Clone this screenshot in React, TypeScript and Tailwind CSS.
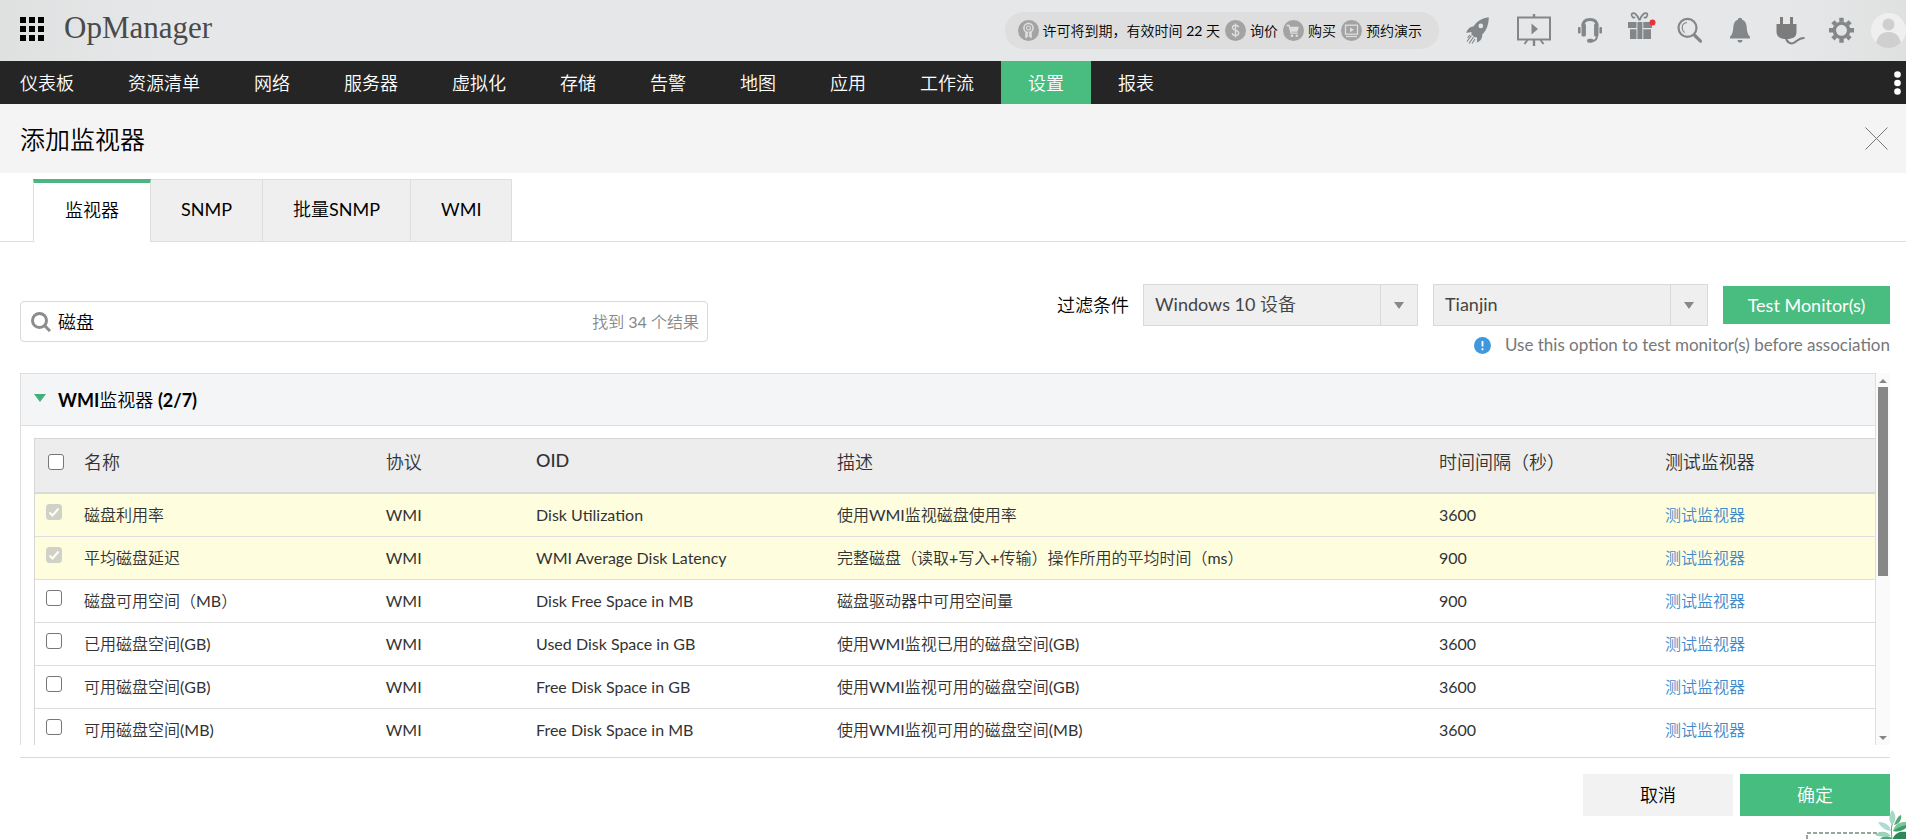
import React, { useState } from "react";

const NAV = ["仪表板", "资源清单", "网络", "服务器", "虚拟化", "存储", "告警", "地图", "应用", "工作流", "设置", "报表"];
const TABS = ["监视器", "SNMP", "批量SNMP", "WMI"];

type Monitor = { name: string; oid: string; desc: string; interval: number; associated?: boolean };

const MONITORS: Monitor[] = [
  { name: "磁盘利用率", oid: "Disk Utilization", desc: "使用WMI监视磁盘使用率", interval: 3600, associated: true },
  { name: "平均磁盘延迟", oid: "WMI Average Disk Latency", desc: "完整磁盘（读取+写入+传输）操作所用的平均时间（ms）", interval: 900, associated: true },
  { name: "磁盘可用空间（MB）", oid: "Disk Free Space in MB", desc: "磁盘驱动器中可用空间量", interval: 900 },
  { name: "已用磁盘空间(GB)", oid: "Used Disk Space in GB", desc: "使用WMI监视已用的磁盘空间(GB)", interval: 3600 },
  { name: "可用磁盘空间(GB)", oid: "Free Disk Space in GB", desc: "使用WMI监视可用的磁盘空间(GB)", interval: 3600 },
  { name: "可用磁盘空间(MB)", oid: "Free Disk Space in MB", desc: "使用WMI监视可用的磁盘空间(MB)", interval: 3600 },
];

function IconButton({ label, width, children }: { label: string; width: number; children: React.ReactNode }) {
  return (
    <button type="button" aria-label={label} className="shrink-0 text-[#83878a]">
      <svg width={width} height="36" viewBox={`0 0 ${width} 36`} fill="currentColor" className="block overflow-visible">
        {children}
      </svg>
    </button>
  );
}

function PillIcon({ children }: { children: React.ReactNode }) {
  return (
    <svg width="21" height="21" viewBox="0 0 21 21" fill="none" stroke="#dedede" className="block shrink-0">
      <circle cx="10.5" cy="10.5" r="10.5" fill="#a3a3a3" stroke="none" />
      {children}
    </svg>
  );
}

function LicensePill() {
  return (
    <div className="flex h-[37px] items-center gap-[5px] rounded-full bg-[#dedede] pl-[13px] pr-[17px] text-sm text-black">
      <span className="flex items-center gap-1">
        <PillIcon>
          <circle cx="10.5" cy="8" r="4.6" strokeWidth="1.6" />
          <circle cx="10.5" cy="8" r="2" strokeWidth="1.2" />
          <path d="M7.5 12v6l3-2 3 2v-6" fill="#dedede" strokeWidth="0.6" />
          <path d="M10.5 12.5v3.5" stroke="#a3a3a3" strokeWidth="1.2" />
        </PillIcon>
        许可将到期，有效时间 22 天
      </span>
      <a href="#quote" className="flex items-center gap-1">
        <PillIcon>
          <path d="M13.6 7.2c-.4-1.3-1.5-2-3.1-2-1.8 0-3 .9-3 2.4 0 3.5 6.2 1.9 6.2 5.4 0 1.6-1.3 2.6-3.2 2.6-1.8 0-3.1-.9-3.3-2.4M10.5 3.4v14" strokeWidth="1.4" />
        </PillIcon>
        询价
      </a>
      <a href="#buy" className="flex items-center gap-1">
        <PillIcon>
          <path d="M3.5 5.5h2.6l2 7.6h6.6" strokeWidth="1.4" />
          <path d="M6.6 6.8h9.4l-1.6 5H8z" fill="#dedede" stroke="none" />
          <circle cx="9" cy="15.8" r="1.3" fill="#dedede" stroke="none" />
          <circle cx="13.8" cy="15.8" r="1.3" fill="#dedede" stroke="none" />
        </PillIcon>
        购买
      </a>
      <a href="#demo" className="flex items-center gap-1">
        <PillIcon>
          <rect x="4.5" y="5.2" width="12" height="9" strokeWidth="1.3" />
          <path d="M9 7.4v4.8l4-2.4z" fill="#dedede" stroke="none" />
          <path d="M5 16.5h11" strokeWidth="1.2" />
        </PillIcon>
        预约演示
      </a>
    </div>
  );
}

function HeaderIcons() {
  return (
    <div className="flex items-center gap-6">
      <IconButton label="快速入门" width={26}>
        <path
          fillRule="evenodd"
          d="M23.8 4.2C17 5 11.500 8.500 8.500 13.500 5 13.500 2.500 16 1.200 20c2.200-.8 4-.9 5.600-.6l-.6 1.800 3.600 3.400 1.800-.6c.5 1.600.7 3 .2 5.600 3.600-1.600 5.800-4.400 5.400-8.200C21.500 17.500 23.700 11.500 23.800 4.200zM15.800 10.600a2.300 2.300 0 1 1 0 4.600 2.300 2.300 0 0 1 0-4.600z"
        />
        <path d="M6.500 22.500 2 28.500M8.500 24 4 30.500M10 26l-3 4.500M4.800 22 2.600 25" stroke="currentColor" strokeWidth="1.200" />
      </IconButton>
      <IconButton label="演示" width={38}>
        <path fill="none" stroke="currentColor" strokeWidth="2" d="M3 4.500h32v22H3z" />
        <path d="M17.800 1h2.400v3.500h-2.400zM17.800 27h2.400v6h-2.400zM16.500 10.500v11l6.500-5.500z" />
        <path stroke="currentColor" strokeWidth="2" d="m12.500 27-3 4M25.500 27l3 4" />
      </IconButton>
      <IconButton label="支持" width={26}>
        <g fill="none" stroke="currentColor">
          <path strokeWidth="3" d="M6 13C6 8.500 8.500 6.500 13 6.500s7 2 7 6.500" />
          <path strokeWidth="2" d="M20 22.500c0 4-2 5.500-5 5.500" />
        </g>
        <rect x="4.500" y="10.500" width="4.400" height="13" rx="1.600" />
        <rect x="17.100" y="10.500" width="4.400" height="13" rx="1.600" />
        <rect x="1" y="14" width="2.600" height="6.500" rx="1" />
        <rect x="22.400" y="14" width="2.600" height="6.500" rx="1" />
        <rect x="10" y="25.800" width="6.500" height="4" rx="2" />
      </IconButton>
      <IconButton label="新功能" width={26}>
        <path fill="none" stroke="currentColor" strokeWidth="1.800" d="M12.500 7.500C10.500 1.500 6.500-1.500 4.800.8 3.500 3 7 6 8 4M12.500 7.500C14.500 1.500 18.500-1.500 20.200.8 21.500 3 18 6 17 4" />
        <path d="M1 9h8.500v6H1zM10.400 9h5v17h-5zM16.300 9H25v6h-8.700zM3 16.200h6.500V26H3zM16.300 16.200H24V26h-7.700z" />
        <circle cx="25.500" cy="9.500" r="3" fill="#ec2f38" />
      </IconButton>
      <IconButton label="搜索" width={26}>
        <circle cx="10.500" cy="14.800" r="9" fill="none" stroke="currentColor" strokeWidth="2.200" />
        <path fill="none" stroke="currentColor" strokeWidth="1.200" d="M10 9.500c-3 .3-5 2.500-4.800 5.800.2 2 1.200 3.500 2.600 4.300" />
        <path stroke="currentColor" strokeWidth="3.200" strokeLinecap="round" d="m17.800 22.500 5.700 5.700" />
      </IconButton>
      <IconButton label="告警通知" width={26}>
        <path d="M13 4.800c1.300 0 2 .8 2.200 2 3 1 4.300 3.800 4.500 7.500.2 4.500 1 7.300 3.300 9.400v1.800H3v-1.800c2.300-2.100 3.100-4.900 3.300-9.400.2-3.700 1.500-6.500 4.500-7.500.2-1.200.9-2 2.200-2z" />
        <path d="M10.500 27h5c-.2 1.800-1.200 2.600-2.500 2.600s-2.300-.8-2.500-2.600z" />
      </IconButton>
      <IconButton label="连接" width={28}>
        <path fill="#7c7c7c" d="M3 4h3v7h7V4h3v7h3.500v8c0 5-3.500 7-9.500 7S-.5 24-.5 19v-8H3z" />
        <path fill="none" stroke="#7c7c7c" strokeWidth="2" d="M9 25c1 5 5.500 6.500 8.500 4.500s5-5 10-4.500" />
      </IconButton>
      <IconButton label="设置" width={25}>
        <circle cx="12.500" cy="17.300" r="7.200" fill="none" stroke="currentColor" strokeWidth="3.400" />
        <g stroke="currentColor" strokeWidth="4.400">
          <path d="M12.500 4.800v4M12.500 25.800v4M0 17.300h4M21 17.300h4" />
          <path d="m3.900 8.700 2.600 2.600M18.500 23.300l2.600 2.600M3.900 25.900l2.600-2.600M18.500 11.300l2.600-2.600" />
        </g>
      </IconButton>
      <button type="button" aria-label="用户" className="-ml-[7px] shrink-0">
        <svg width="35" height="36" viewBox="0 0 35 36" className="block">
          <clipPath id="avatar">
            <circle cx="17.500" cy="17.500" r="17.500" />
          </clipPath>
          <g clipPath="url(#avatar)">
            <rect width="35" height="36" fill="#efefef" />
            <circle cx="17.500" cy="11.500" r="6" fill="#cfcfcf" />
            <path d="M4.500 36c0-11 4.500-17 13-17s13 6 13 17z" fill="#cfcfcf" />
          </g>
        </svg>
      </button>
    </div>
  );
}

function FilterSelect({ label, value }: { label: string; value: string }) {
  return (
    <div className="relative flex h-[42px] w-[275px] border border-[#d9d9d9] bg-[#efefef]">
      <select
        aria-label={label}
        defaultValue={value}
        className="w-full appearance-none bg-transparent pb-0.5 pl-[11px] pr-10 text-lg text-[#444] outline-none"
      >
        <option>{value}</option>
      </select>
      <span className="pointer-events-none absolute inset-y-0 right-0 flex w-[37px] items-center justify-center border-l border-[#d9d9d9]">
        <svg width="10" height="7" viewBox="0 0 10 7" fill="#888">
          <path d="M0 0h10L5 7z" />
        </svg>
      </span>
    </div>
  );
}

function CheckBox({ label, defaultChecked, disabled }: { label: string; defaultChecked?: boolean; disabled?: boolean }) {
  return (
    <span className="relative block size-4">
      <input
        type="checkbox"
        aria-label={label}
        defaultChecked={defaultChecked}
        disabled={disabled}
        className="peer block size-4 appearance-none rounded-[3px] border border-[#767676] bg-white checked:border-[#0075ff] checked:bg-[#0075ff] disabled:border-[#d1d1c8] disabled:bg-[#d1d1c8]"
      />
      <svg
        viewBox="0 0 16 16"
        fill="none"
        stroke="#fefff0"
        strokeWidth="2"
        className="pointer-events-none absolute inset-0 hidden size-4 peer-checked:block"
      >
        <path d="m3.500 8.500 3 3 6-7" />
      </svg>
    </span>
  );
}

function MonitorTable() {
  return (
    <table className="w-full table-fixed border-separate border-spacing-0 border-l border-t border-[#d6d6d6] text-left text-base text-[#333]">
      <colgroup>
        <col className="w-[49px]" />
        <col className="w-[16.400%]" />
        <col className="w-[8.170%]" />
        <col className="w-[16.350%]" />
        <col className="w-[32.720%]" />
        <col className="w-[12.280%]" />
        <col />
      </colgroup>
      <thead>
        <tr className="h-[55px] bg-[#ededed] text-lg [&>th]:border-b-2 [&>th]:border-[#dadada] [&>th]:pb-[7px] [&>th]:font-normal">
          <th className="pl-[13px]">
            <CheckBox label="全选" />
          </th>
          <th>名称</th>
          <th>协议</th>
          <th>
            <span className="block pb-1 font-medium">OID</span>
          </th>
          <th>描述</th>
          <th>时间间隔（秒）</th>
          <th>测试监视器</th>
        </tr>
      </thead>
      <tbody>
        {MONITORS.map((m) => (
          <tr
            key={m.name}
            className={`h-[43px] [&>td]:whitespace-nowrap [&>td]:border-b [&>td]:border-[#dedede] ${m.associated ? "bg-[#fefedf]" : "bg-white"}`}
          >
            <td className="pb-[6px] pl-[11px]">
              <CheckBox label={m.name} defaultChecked={m.associated} disabled={m.associated} />
            </td>
            <td>{m.name}</td>
            <td>WMI</td>
            <td>{m.oid}</td>
            <td>{m.desc}</td>
            <td>{m.interval}</td>
            <td>
              <a href="#test" className="text-[#428bca]">
                测试监视器
              </a>
            </td>
          </tr>
        ))}
      </tbody>
    </table>
  );
}

function ScrollTrack() {
  return (
    <div aria-hidden="true" className="flex w-[14px] shrink-0 flex-col items-center bg-[#fafafa]">
      <svg width="8" height="14" viewBox="0 0 8 14" fill="#858585" className="shrink-0">
        <path d="M0 10h8L4 6z" />
      </svg>
      <div className="min-h-0 flex-1">
        <div className="h-[55%] w-[10px] bg-[#878787]" />
      </div>
      <svg width="8" height="14" viewBox="0 0 8 14" fill="#858585" className="shrink-0">
        <path d="M0 5h8L4 9z" />
      </svg>
    </div>
  );
}

function LeafOrnament() {
  return (
    <svg width="100" height="30" viewBox="0 0 100 30" className="pointer-events-none absolute bottom-0 right-0 block" aria-hidden="true">
      <path d="M1 30v-6h77" fill="none" stroke="#6f8f79" strokeWidth="1.500" strokeDasharray="4 2" />
      <path d="M86 30c-1-9-1-14 2-18" fill="none" stroke="#5f9c78" />
      <path d="M86 16c-4-5-3-10 0-15 4 4 5 10 0 15z" fill="#a5d9c2" />
      <path d="M88 16c2-5 4-9 7-10 1 5-2 9-7 10z" fill="#57a77c" />
      <path d="M85 22c-7-1-10-4-13-9 7 0 12 3 13 9z" fill="#aedbd3" />
      <path d="M87 22c2-7 6-9 13-9v5c-4 4-8 5-13 4z" fill="#7cc49c" />
      <path d="M87 22c4-3 8-5 13-6v3c-4 3-8 4-13 3z" fill="#3d9f67" />
      <path d="M85 27c-6 1-12 1-16-1 5-5 12-4 16 1z" fill="#9ad3bb" />
      <path d="M87 29c3-6 8-7 13-6v7H87z" fill="#2d8758" />
      <path d="M74 30c3-3 8-3 12-1v1z" fill="#4ea67d" />
    </svg>
  );
}

export default function App() {
  const [tab, setTab] = useState(0);
  const [query, setQuery] = useState("磁盘");

  return (
    <div className="relative flex h-screen min-w-[1500px] flex-col overflow-hidden bg-white font-[Lato,'Noto_Sans_CJK_SC_DemiLight','Noto_Sans_CJK_SC',sans-serif] text-black">
      <header className="flex h-[61px] shrink-0 items-center bg-[linear-gradient(90deg,#dfe0e0_0%,#e6e7e8_8%,#e6e7e8_94%,#dfe0e0_100%)] pl-5">
        <button type="button" aria-label="应用菜单" className="pb-[3px]">
          <svg width="24" height="24" viewBox="0 0 24 24" className="block">
            <path d="M0 0h6v6H0zM9 0h6v6H9zM18 0h6v6h-6zM0 9h6v6H0zM9 9h6v6H9zM18 9h6v6h-6zM0 18h6v6H0zM9 18h6v6H9zM18 18h6v6h-6z" />
          </svg>
        </button>
        <h1 className="ml-5 pb-[5px] font-['Liberation_Serif',serif] text-[31px] leading-9 text-[#4a4a4a]">OpManager</h1>
        <div className="ml-auto flex items-center gap-[26px]">
          <LicensePill />
          <HeaderIcons />
        </div>
      </header>

      <nav className="flex h-[43px] shrink-0 items-stretch bg-[#252525] pl-5 text-lg text-white">
        <div className="-ml-[27px] flex">
          {NAV.map((item) => (
            <a
              key={item}
              href="#nav"
              className={`flex items-center px-[27px] ${item === "设置" ? "bg-[#49bd80]" : ""}`}
            >
              {item}
            </a>
          ))}
        </div>
        <button type="button" aria-label="更多" className="ml-auto pr-[5px]">
          <svg width="7" height="24" viewBox="0 0 7 24" fill="#fff" className="block">
            <circle cx="3.500" cy="3.500" r="3.300" />
            <circle cx="3.500" cy="12" r="3.300" />
            <circle cx="3.500" cy="20.500" r="3.300" />
          </svg>
        </button>
      </nav>

      <div className="flex h-[69px] shrink-0 items-center justify-between bg-[#f4f4f4] pl-5 pr-[18px]">
        <h2 className="text-[25px] leading-8">添加监视器</h2>
        <button type="button" aria-label="关闭">
          <svg width="23" height="23" viewBox="0 0 23 23" stroke="#777" className="block">
            <path d="m.5.5 22 22M22.500.5l-22 22" />
          </svg>
        </button>
      </div>

      <div role="tablist" className="mt-[6px] flex shrink-0 border-b border-[#dedede] pl-[33px] text-lg">
        {TABS.map((label, i) => (
          <button
            key={label}
            type="button"
            role="tab"
            aria-selected={tab === i}
            onClick={() => setTab(i)}
            className={`-mb-px h-[63px] border-r border-[#dedede] ${
              tab === i
                ? "border-l border-t-4 border-t-[#4db584] bg-white px-[31px] pb-[6px]"
                : "border-y bg-[#efefef] px-[30px] pb-[3px]"
            }`}
          >
            {label}
          </button>
        ))}
      </div>

      <main className="flex min-h-0 flex-1 flex-col pl-5 pr-4">
        <div className="mt-[42px] flex shrink-0 items-start justify-between">
          <div className="mt-[17px] flex h-[41px] w-[688px] items-center rounded border border-[#d9d9d9] pl-[10px] pr-2">
            <svg width="20" height="20" viewBox="0 0 20 20" fill="none" stroke="#8c8c8c" strokeWidth="3" className="shrink-0">
              <circle cx="8.500" cy="8.500" r="7" />
              <path d="m13.500 13.500 5.500 5.500" />
            </svg>
            <input
              aria-label="搜索监视器"
              value={query}
              onChange={(e) => setQuery(e.target.value)}
              className="ml-[7px] min-w-0 flex-1 text-lg outline-none"
            />
            <span className="text-base text-[#888]">找到 34 个结果</span>
          </div>
          <div className="flex flex-col items-end">
            <div className="flex items-center">
              <span className="mr-[14px] text-lg">过滤条件</span>
              <FilterSelect label="设备模板" value="Windows 10 设备" />
              <div className="w-[15px]" />
              <FilterSelect label="设备" value="Tianjin" />
              <button type="button" className="ml-[15px] h-[38px] w-[167px] bg-[#49bd80] text-lg text-white">
                Test Monitor(s)
              </button>
            </div>
            <p className="mt-[5px] flex items-center gap-[14px] text-[17px] leading-7 text-[#777]">
              <svg width="17" height="17" viewBox="0 0 17 17">
                <circle cx="8.500" cy="8.500" r="8.500" fill="#3f97dc" />
                <path d="M8.500 4v5.500M8.500 11.200v2" stroke="#fff" strokeWidth="1.800" />
              </svg>
              Use this option to test monitor(s) before association
            </p>
          </div>
        </div>

        <div className="mt-[14px] flex min-h-0 flex-1">
          <section className="min-w-0 flex-1 overflow-hidden border-x border-t border-[#dedede]">
            <button
              type="button"
              aria-expanded="true"
              className="flex h-[52px] w-full items-center border-b border-[#dedede] bg-[#f3f5f7] pl-[13px] text-lg"
            >
              <svg width="12" height="8" viewBox="0 0 12 8" fill="#43b078" className="mr-3 mb-1">
                <path d="M0 0h12L6 8z" />
              </svg>
              <strong className="font-bold">WMI</strong>监视器&nbsp;<strong className="font-bold">(2/7)</strong>
            </button>
            <div className="pl-[13px] pt-3">
              <MonitorTable />
            </div>
          </section>
          <ScrollTrack />
        </div>

        <footer className="mt-3 flex shrink-0 justify-end gap-[7px] border-t border-[#dadada] pb-[23px] pt-4 text-lg">
          <button type="button" className="h-[42px] w-[150px] bg-[#f2f2f2]">
            取消
          </button>
          <button type="button" className="h-[42px] w-[150px] bg-[#47bd80] text-white">
            确定
          </button>
        </footer>
      </main>

      <LeafOrnament />
    </div>
  );
}
